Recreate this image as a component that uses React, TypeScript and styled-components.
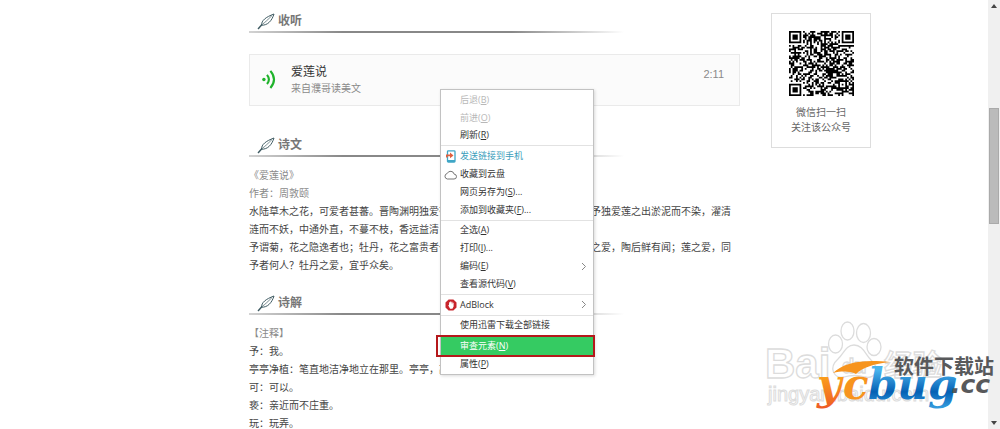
import React from 'react';
import styled, { createGlobalStyle } from 'styled-components';

const GlobalStyle = createGlobalStyle`
  * { box-sizing: border-box; }
  body {
    margin: 0;
    background: #fff;
    color: #444;
    font-family: "Liberation Sans", "Noto Sans CJK SC", sans-serif;
    font-size: 10px;
  }
  p, h2, h3, ul { margin: 0; padding: 0; }
`;

const Page = styled.div`
  position: relative;
  display: flex;
  height: 100vh;
  overflow: hidden;
`;

const Content = styled.div`
  flex: 1;
  min-width: 0;
  display: grid;
  grid-template-columns: minmax(0, 491px) 100px;
  column-gap: 31px;
  align-items: start;
  padding-left: 249px;
`;

const Main = styled.main`
  padding-top: 10px;
`;

const Heading = styled.h2`
  display: flex;
  align-items: center;
  gap: 3px;
  width: 375px;
  height: 23px;
  padding: 0 0 1px 8px;
  color: #777;
  font-size: 12px;
  line-height: 20px;
  font-weight: 700;
  background: linear-gradient(90deg, rgba(110, 110, 110, 0.3), #888 25%, #888 70%, rgba(110, 110, 110, 0)) bottom / 100% 2px no-repeat;
`;

const AudioCard = styled.section`
  display: flex;
  align-items: flex-start;
  height: 52px;
  margin: 21px 0 28px;
  padding: 9px 15px 0 12px;
  background: #fbfbfb;
  border: 1px solid #eaeaea;
`;

const PlayButton = styled.button`
  width: 16px;
  height: 20px;
  margin: 5px 13px 0 0;
  padding: 0;
  border: 0;
  background: none;
`;

const AudioInfo = styled.div`
  flex: 1;
`;

const AudioTitle = styled.h3`
  color: #333;
  font-size: 12px;
  line-height: 17px;
  font-weight: 400;
`;

const Muted = styled.p<{ $tight?: boolean }>`
  color: #8a8a8a;
  line-height: ${(p) => (p.$tight ? 15 : 18)}px;
`;

const Duration = styled.time`
  color: #8a8a8a;
  font-size: 11px;
  line-height: 20px;
`;

const Passage = styled.div`
  margin: 10px 0 17px;
  line-height: 18px;
  white-space: nowrap;
`;

const Line = styled.p<{ $full?: boolean }>`
  display: flex;
  justify-content: space-between;
  width: ${(p) => (p.$full ? '482px' : 'auto')};
`;

const QrCard = styled.aside`
  display: flex;
  flex-direction: column;
  align-items: center;
  height: 135px;
  margin-top: 13px;
  padding-top: 17px;
  border: 1px solid #ddd;
  color: #666;
  line-height: 15px;
  text-align: center;
`;

const QrCaption = styled.p`
  margin-top: 9px;
`;

const ScrollBar = styled.div`
  display: flex;
  flex-direction: column;
  align-items: center;
  justify-content: space-between;
  width: 12px;
  background: #f0f0f0;
`;

const ScrollButton = styled.button`
  display: flex;
  align-items: center;
  justify-content: center;
  width: 12px;
  height: 12px;
  padding: 0;
  border: 0;
  background: none;
`;

const Track = styled.div`
  flex: 1;
  width: 10px;
  padding-top: 96px;
`;

const Thumb = styled.div`
  height: 116px;
  background: #bbb;
  border: 1px solid #aaa;
`;

const Menu = styled.ul`
  position: absolute;
  top: 89px;
  left: 440px;
  z-index: 3;
  display: flex;
  flex-direction: column;
  width: 154px;
  height: 286px;
  padding: 1px 0;
  list-style: none;
  background: #fff;
  border: 1px solid #c2c2c2;
  box-shadow: 1px 1px 3px rgba(0, 0, 0, 0.15);
  font-family: "Open Sans", "Noto Sans CJK SC", sans-serif;
  font-size: 9px;
`;

const MenuRow = styled.li`
  flex: 1;
  display: flex;
`;

const MenuSeparator = styled.li`
  height: 3px;
  background: linear-gradient(#e2e2e2, #e2e2e2) center / 100% 1px no-repeat;
`;

type Tone = 'normal' | 'disabled' | 'link' | 'active';
const toneColor: Record<Tone, string> = {
  normal: '#333',
  disabled: '#b8b8b8',
  link: '#3a9dbb',
  active: '#fff',
};

const MenuButton = styled.button<{ $tone: Tone }>`
  position: relative;
  flex: 1;
  display: grid;
  grid-template-columns: 19px 1fr 12px;
  align-items: center;
  padding: 0;
  border: 0;
  background: ${(p) => (p.$tone === 'active' ? '#35cb62' : 'none')};
  color: ${(p) => toneColor[p.$tone]};
  font: inherit;
  line-height: 12px;
  text-align: left;
  white-space: nowrap;
  outline: 0;

  &::after {
    content: ${(p) => (p.$tone === 'active' ? '""' : 'none')};
    position: absolute;
    inset: -2px -2px -2px -5px;
    border: 2px solid #b5181b;
  }
`;

const MenuIcon = styled.span`
  display: flex;
  justify-content: center;
`;

const Watermark = styled.svg`
  position: absolute;
  right: 0;
  bottom: 0;
  z-index: 2;
`;

const Feather = () => (
  <svg width="18" height="18" viewBox="0 0 18 18" fill="none" stroke="#3e5a62" aria-hidden="true">
    <path d="M1 17 5 12.5" strokeWidth="1.4" />
    <path d="M4.500 13.200C4.500 8.500 8.500 5.200 17 2 14.800 9 10.500 13.500 4.500 13.200Z" strokeWidth="1" />
    <path d="M5 12.500C8 10.500 11 7.500 15 3.500" strokeWidth=".7" />
  </svg>
);

const SoundWaves = () => (
  <svg width="16" height="20" viewBox="0 0 16 20" fill="none" stroke="#1fb32b" strokeWidth="2.100">
    <circle cx="1.900" cy="10.500" r="1.700" fill="#1fb32b" stroke="none" />
    <path d="M5 5.800Q8.800 10.400 5 15M8.400 1.800Q15.600 10.400 8.400 19" />
  </svg>
);

const Phone = () => (
  <svg width="12" height="13" viewBox="0 0 12 13" fill="none">
    <rect x="2.500" y=".8" width="7.500" height="11.200" rx=".8" stroke="#3fa6c6" strokeWidth="1.300" />
    <path d="M2.500 10h7.500v2H2.500z" fill="#3fa6c6" />
    <path d="M1 7.500V4.500H5V2.500L8.500 5.500 5 8.200V6.200H2.500V7.500Z" fill="#e0603f" />
  </svg>
);

const Cloud = () => (
  <svg width="13" height="11" viewBox="0 0 13 11" fill="none" stroke="#666" strokeWidth=".9">
    <path d="M3.300 10H10A2.400 2.400 0 0 0 10.200 5.200 3.700 3.700 0 0 0 3.200 4.500 2.800 2.800 0 0 0 3.300 10Z" />
  </svg>
);

const AdBlock = () => (
  <svg width="12" height="12" viewBox="0 0 12 12">
    <path d="M3.600.5h4.800l3.100 3.100v4.800l-3.100 3.100H3.600L.5 8.400V3.600Z" fill="#c8242b" />
    <path d="M3.200 6.200 4 5.900V3.300h.9V5.300L5.200 2.500h.9V5.300L6.500 2.800h.9V5.500L7.800 3.800h.8V7.500L7.400 9.700H5.100Z" fill="#fff" />
  </svg>
);

const Chevron = () => (
  <svg width="6" height="9" viewBox="0 0 6 9" fill="none" stroke="#888">
    <path d="M1 1 4.500 4.500 1 8" />
  </svg>
);

const QR_SIZE = 37;

const finderAt = (x: number, y: number, ox: number, oy: number): boolean | null => {
  const dx = x - ox;
  const dy = y - oy;
  if (dx < -1 || dy < -1 || dx > 7 || dy > 7) return null;
  const ring = Math.max(Math.abs(dx - 3), Math.abs(dy - 3));
  return ring === 3 || ring <= 1;
};

const buildQrPath = () => {
  let seed = 20731;
  let path = '';
  for (let y = 0; y < QR_SIZE; y++) {
    for (let x = 0; x < QR_SIZE; x++) {
      seed = (seed * 48271) % 2147483647;
      let dark = (seed >> 12) % 100 < 53;
      const finder = finderAt(x, y, 0, 0) ?? finderAt(x, y, 30, 0) ?? finderAt(x, y, 0, 30);
      const ring = Math.max(Math.abs(x - 30), Math.abs(y - 30));
      if (finder !== null) dark = finder;
      else if (ring <= 2) dark = ring !== 1;
      else if (x === 6 || y === 6) dark = (x + y) % 2 === 0;
      if (dark) path += `M${x} ${y}h1v1h-1z`;
    }
  }
  return path;
};

const qrPath = buildQrPath();

const QrCode = () => (
  <svg width="65" height="65" viewBox="0 0 37 37" role="img" aria-label="QR">
    <path d={qrPath} fill="#000" />
  </svg>
);

type Entry = {
  label: string;
  accessKey?: string;
  dots?: boolean;
  tone?: Tone;
  icon?: React.ReactNode;
  submenu?: boolean;
};

const menuGroups: Entry[][] = [
  [
    { label: '后退', accessKey: 'B', tone: 'disabled' },
    { label: '前进', accessKey: 'O', tone: 'disabled' },
    { label: '刷新', accessKey: 'R' },
  ],
  [
    { label: '发送链接到手机', tone: 'link', icon: <Phone /> },
    { label: '收藏到云盘', icon: <Cloud /> },
    { label: '网页另存为', accessKey: 'S', dots: true },
    { label: '添加到收藏夹', accessKey: 'F', dots: true },
  ],
  [
    { label: '全选', accessKey: 'A' },
    { label: '打印', accessKey: 'I', dots: true },
    { label: '编码', accessKey: 'E', submenu: true },
    { label: '查看源代码', accessKey: 'V' },
  ],
  [{ label: 'AdBlock', icon: <AdBlock />, submenu: true }],
  [{ label: '使用迅雷下载全部链接' }],
  [
    { label: '审查元素', accessKey: 'N', tone: 'active' },
    { label: '属性', accessKey: 'P' },
  ],
];

const ContextMenu = () => (
  <Menu>
    {menuGroups.map((group, index) => (
      <React.Fragment key={index}>
        {index > 0 && <MenuSeparator />}
        {group.map((entry) => (
          <MenuRow key={entry.label}>
            <MenuButton $tone={entry.tone ?? 'normal'} disabled={entry.tone === 'disabled'}>
              <MenuIcon>{entry.icon}</MenuIcon>
              <span>
                {entry.label}
                {entry.accessKey && <>(<u>{entry.accessKey}</u>)</>}
                {entry.dots && '...'}
              </span>
              {entry.submenu && <Chevron />}
            </MenuButton>
          </MenuRow>
        ))}
      </React.Fragment>
    ))}
  </Menu>
);

const SiteMarks = () => (
  <Watermark width="250" height="119" viewBox="0 0 250 119">
    <defs>
      <linearGradient id="orange" x1="0" y1="0" x2="0" y2="1">
        <stop offset=".3" stopColor="#fba31c" />
        <stop offset="1" stopColor="#ee5a24" />
      </linearGradient>
      <linearGradient id="blue" x1="0" y1="0" x2="0" y2="1">
        <stop offset=".2" stopColor="#4ab4ee" />
        <stop offset=".65" stopColor="#0560b4" />
        <stop offset="1" stopColor="#38a0e0" />
      </linearGradient>
    </defs>
    <g fill="#fff" stroke="#dcdcdc" strokeWidth="1.300" fontFamily="Liberation Sans, Noto Sans CJK SC, sans-serif" fontWeight="700">
      <text x="15" y="68" fontSize="42">Bai</text>
      <ellipse cx="97.500" cy="21" rx="6.500" ry="9" />
      <ellipse cx="113.500" cy="23" rx="7" ry="9.500" />
      <ellipse cx="85.500" cy="34" rx="7" ry="9" />
      <ellipse cx="124" cy="37" rx="7" ry="8.500" />
      <path d="M104 35C96 35 94 43 88 49 78 58 84 69 94 67 101 65 108 65 115 67 126 69 130 58 121 50 115 44 113 35 104 35Z" />
      <text x="92" y="63" fontSize="20">du</text>
      <text x="134" y="66" fontSize="29">经验</text>
      <text x="18" y="91" fontSize="20" fontWeight="400" strokeWidth="1">jingyan.baidu.com</text>
    </g>
    <path d="M83 63C94 52 114 49 140 52 124 54 113 57 106 64 99 61 92 61 83 63Z" fill="#f7941e" />
    <g fontFamily="DejaVu Serif, serif" fontStyle="italic" fontWeight="700" fontSize="42">
      <text x="67" y="89" fill="url(#orange)">y</text>
      <text x="93" y="89" fill="#f7941e">c</text>
      <text x="118" y="89" fill="url(#blue)">bug</text>
    </g>
    <text x="201" y="83" fontSize="25" fill="#58595b" fontFamily="DejaVu Sans, sans-serif" fontStyle="italic" fontWeight="700">.cc</text>
    <text x="144" y="64" fontSize="20" fill="#58595b" fontFamily="Noto Sans CJK SC, sans-serif" fontWeight="700">软件下载站</text>
  </Watermark>
);

const SectionHeading = ({ children }: { children: string }) => (
  <Heading>
    <Feather />
    {children}
  </Heading>
);

export default function App() {
  return (
    <Page>
      <GlobalStyle />
      <Content>
        <Main>
          <SectionHeading>收听</SectionHeading>
          <AudioCard>
            <PlayButton aria-label="播放">
              <SoundWaves />
            </PlayButton>
            <AudioInfo>
              <AudioTitle>爱莲说</AudioTitle>
              <Muted $tight>来自濮哥读美文</Muted>
            </AudioInfo>
            <Duration>2:11</Duration>
          </AudioCard>

          <SectionHeading>诗文</SectionHeading>
          <Passage>
            <Muted>《爱莲说》</Muted>
            <Muted>作者：周敦颐</Muted>
            <Line $full>
              <span>水陆草木之花，可爱者甚蕃。晋陶渊明独爱菊。自李唐来，</span>
              <span>世人甚爱牡丹。予独爱莲之出淤泥而不染，濯清</span>
            </Line>
            <Line>涟而不妖，中通外直，不蔓不枝，香远益清，亭亭净植，可远观而不可亵玩焉。</Line>
            <Line $full>
              <span>予谓菊，花之隐逸者也；牡丹，花之富贵者也；</span>
              <span>莲，花之君子者也。噫！菊之爱，陶后鲜有闻；莲之爱，同</span>
            </Line>
            <Line>予者何人？牡丹之爱，宜乎众矣。</Line>
          </Passage>

          <SectionHeading>诗解</SectionHeading>
          <Passage>
            <Muted>【注释】</Muted>
            <Line>予：我。</Line>
            <Line>亭亭净植：笔直地洁净地立在那里。亭亭，高高耸立的样子。植，树立的意思。</Line>
            <Line>可：可以。</Line>
            <Line>亵：亲近而不庄重。</Line>
            <Line>玩：玩弄。</Line>
          </Passage>
        </Main>

        <QrCard>
          <QrCode />
          <QrCaption>
            微信扫一扫
            <br />
            关注该公众号
          </QrCaption>
        </QrCard>
      </Content>

      <ScrollBar>
        <ScrollButton aria-label="向上">
          <svg width="6" height="4" viewBox="0 0 6 4"><path d="M0 4 3 0 6 4Z" fill="#444" /></svg>
        </ScrollButton>
        <Track>
          <Thumb />
        </Track>
        <ScrollButton aria-label="向下">
          <svg width="6" height="4" viewBox="0 0 6 4"><path d="M0 0 3 4 6 0Z" fill="#444" /></svg>
        </ScrollButton>
      </ScrollBar>

      <ContextMenu />
      <SiteMarks />
    </Page>
  );
}
